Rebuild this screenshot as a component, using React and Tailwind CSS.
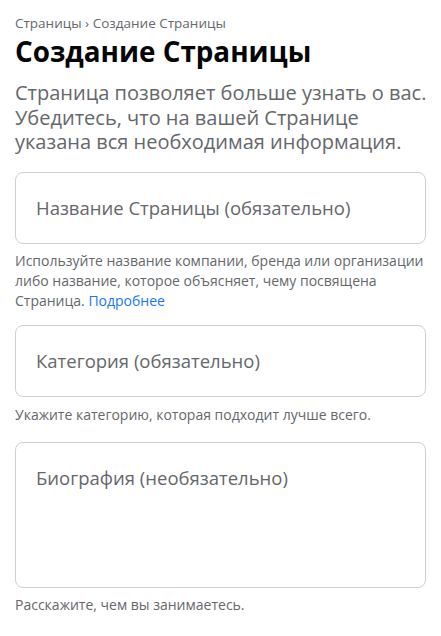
import React from "react";

const Field = ({ placeholder, multiline }) => {
  if (multiline) {
    return (
      <textarea
        placeholder={placeholder}
        className="block w-full h-[146px] resize-none rounded-lg border border-[#ccd0d5] bg-white px-5 pt-[23px] text-[18.5px] leading-[24px] text-[#050505] placeholder:text-[#65676b] outline-none"
      />
    );
  }
  return (
    <input
      type="text"
      placeholder={placeholder}
      className="block w-full h-[72px] rounded-lg border border-[#ccd0d5] bg-white px-5 text-[18.5px] text-[#050505] placeholder:text-[#65676b] outline-none"
    />
  );
};

const Hint = ({ children, className = "" }) => (
  <p className={`text-[14px] leading-[20px] text-[#65676b] ${className}`}>
    {children}
  </p>
);

export default function App() {
  return (
    <div className="min-h-screen bg-white px-[15px] pt-[13px] font-['Open_Sans',sans-serif]">
      <div className="text-[13.5px] leading-[20px] text-[#65676b]">
        Страницы › Создание Страницы
      </div>
      <h1 className="mt-px text-[27.8px] font-bold leading-[34px] text-[#050505]">
        Создание Страницы
      </h1>
      <p className="-mr-[14px] mt-[13px] text-[20px] leading-[24.5px] text-[#65676b]">
        Страница позволяет больше узнать о вас. Убедитесь, что на вашей
        Странице указана вся необходимая информация.
      </p>

      <div className="mt-[17px]">
        <Field placeholder="Название Страницы (обязательно)" />
        <Hint className="mt-[7px]">
          Используйте название компании, бренда или организации либо название,
          которое объясняет, чему посвящена Страница.{" "}
          <a href="#" className="text-[#1877f2]">
            Подробнее
          </a>
        </Hint>
      </div>

      <div className="mt-[14px]">
        <Field placeholder="Категория (обязательно)" />
        <Hint className="mt-[8px]">
          Укажите категорию, которая подходит лучше всего.
        </Hint>
      </div>

      <div className="mt-[17px]">
        <Field placeholder="Биография (необязательно)" multiline />
        <Hint className="mt-[7px]">Расскажите, чем вы занимаетесь.</Hint>
      </div>
    </div>
  );
}
